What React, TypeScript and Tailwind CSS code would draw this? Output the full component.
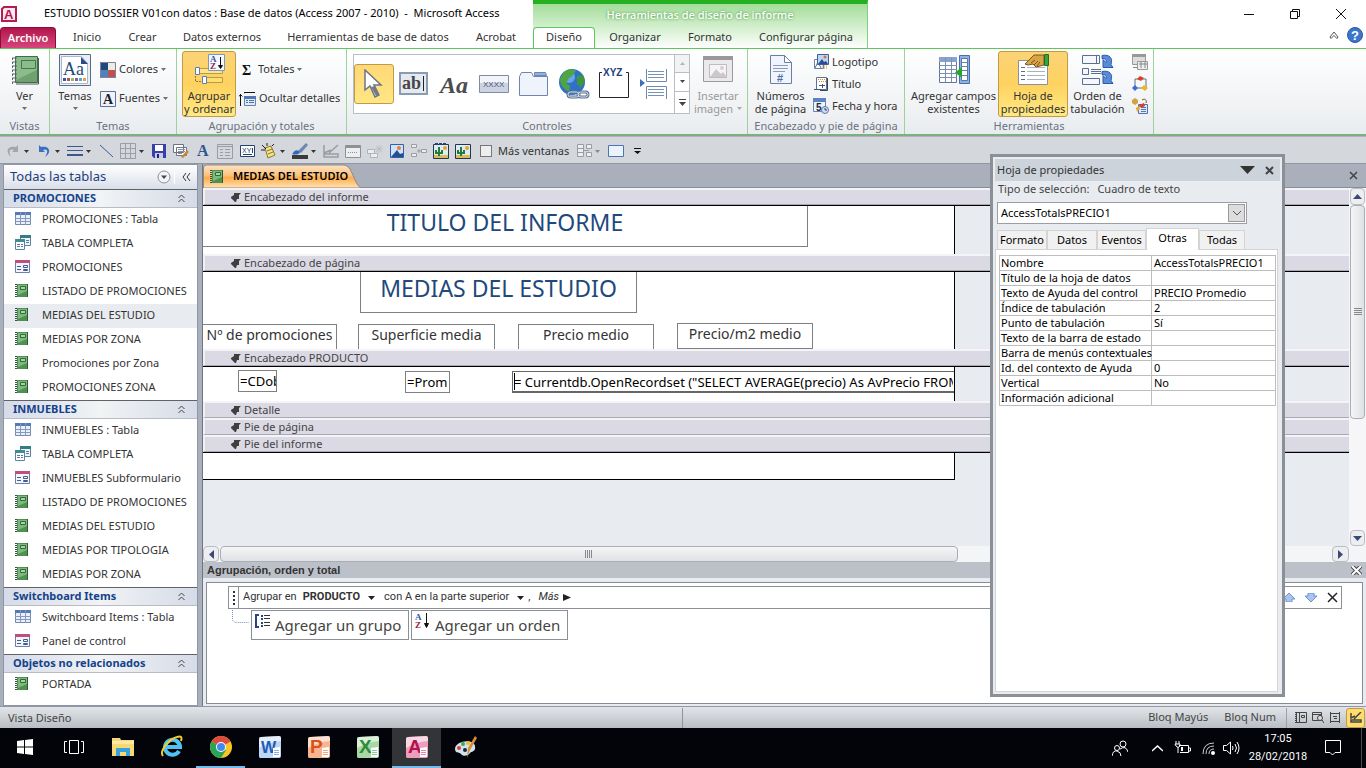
import type { ReactNode } from 'react'
import clsx from 'clsx'

const Svg = ({ w, h, children }: { w: number; h: number; children: ReactNode }) => (
  <svg width={w} height={h} viewBox={`0 0 ${w} ${h}`} fill="none" aria-hidden="true" className="shrink-0">
    {children}
  </svg>
)

const Caret = ({ color = '#6b6f76' }: { color?: string }) => (
  <Svg w={5} h={3}><path d="M0 0h5L2.500 3z" fill={color} /></Svg>
)

/* ---------- ribbon icons ---------- */

const NotebookBig = () => (
  <Svg w={32} h={32}>
    <path d="M6.500 2.500h22v26h-22z" fill="#6fa070" stroke="#3f6f46" />
    <path d="M7 3h21v13L7 26z" fill="#8dbb8c" />
    <path d="M12.500 6.500h14v8h-14z" stroke="#3f7a4a" />
    <path d="M29.500 4v26H7" stroke="#53595c" />
    {[4, 8, 12, 16, 20, 24, 28].map((y) => <path key={y} d={`M3 ${y}h5M3.500 ${y}v2`} stroke="#5c6470" />)}
  </Svg>
)

const ThemesBig = () => (
  <Svg w={32} h={32}>
    <path d="M.500.500h31v31H.500z" fill="#e8eef6" stroke="#5a6a88" />
    <path d="M2.500 2.500h20l6 7v20h-26z" fill="#fff" stroke="#a8b8d0" />
    <path d="M22 3v7h7z" fill="#294a86" />
    <text x="4" y="21" fontSize="18" fontFamily="Liberation Serif, serif" fill="#1f4a7d">Aa</text>
    <path d="M4 24h3v3H4z" fill="#2f5ca0" /><path d="M8 24h3v3H8z" fill="#c0504d" />
    <path d="M12 24h3v3h-3z" fill="#9bbb59" /><path d="M16 24h3v3h-3z" fill="#7f62a1" />
    <path d="M20 24h3v3h-3z" fill="#4bacc6" /><path d="M24 24h3v3h-3z" fill="#f79646" />
  </Svg>
)

const ColorsIcon = () => (
  <Svg w={16} h={16}>
    <path d="M0 0h8v8H0z" fill="#1f497d" /><path d="M8 0h8v8H8z" fill="#eeece1" />
    <path d="M0 8h8v8H0z" fill="#4f81bd" /><path d="M8 8h8v8H8z" fill="#c0504d" />
    <path d="M.5.500h15v15H.500z" stroke="#7c8597" />
  </Svg>
)

const FontsIcon = () => (
  <Svg w={16} h={16}>
    <path d="M.5.500h15v15H.500z" fill="#eef3fb" stroke="#5f7396" />
    <text x="3" y="13" fontSize="14" fontWeight="bold" fontFamily="Liberation Serif, serif" fill="#1b1f28">A</text>
  </Svg>
)

const GroupSortBig = () => (
  <Svg w={32} h={32}>
    <path d="M3.500 14.500h26v5h-26z" fill="#ffe58a" stroke="#b99b45" /><path d="M2.500 13.500h4v7h-4z" fill="#fff" stroke="#5a7fb8" />
    <path d="M10.500 23.500h19v5h-19z" fill="#ffdf70" stroke="#b99b45" /><path d="M9.500 22.500h4v7h-4z" fill="#fff" stroke="#5a7fb8" />
    <path d="M2.500 22v5.500H8" stroke="#8b7a45" strokeDasharray="2 1" />
    <path d="M15.500.500h16v16h-16z" fill="#f5f9ff" stroke="#7799c8" />
    <text x="17" y="8" fontSize="9" fontWeight="bold" fontFamily="Liberation Serif, serif" fill="#2b57a5">A</text>
    <text x="17" y="15" fontSize="9" fontWeight="bold" fontFamily="Liberation Serif, serif" fill="#94263b">Z</text>
    <path d="M27.500 3v11M25.500 11.500l2 3 2-3z" stroke="#111" fill="#111" />
  </Svg>
)

const HideDetailIcon = () => (
  <Svg w={17} h={14}>
    <path d="M1.500 2v12M0 4.500l1.500-2 2 2M5 .500h11M5 1l2-1" stroke="#111" />
    <path d="M5.500 4.500h11v9h-11z" fill="#dfe9f8" stroke="#6384b4" /><path d="M5 4h12v3H5z" fill="#4f77b5" />
    <path d="M7 8.500h2M10 8.500h5M7 10.500h2M10 10.500h5" stroke="#54719d" />
  </Svg>
)

const PointerBig = () => (
  <Svg w={24} h={30}>
    <path d="M3 1v20l5-4 5 11 4-2-5-10h7z" fill="#fff" stroke="#6d7484" strokeWidth="1.500" />
    <path d="M9 18l5 9 3-1-4-9z" fill="#737b8b" />
  </Svg>
)

const TextBoxBig = () => (
  <Svg w={30} h={24}>
    <path d="M1 1h27v21H1z" fill="#e5eaf1" stroke="#8b9bb3" strokeWidth="2" />
    <text x="3" y="17" fontSize="18" fontWeight="bold" fontFamily="Liberation Serif, serif" fill="#464646">ab</text>
    <path d="M24.500 4v15" stroke="#222" />
  </Svg>
)

const LabelBig = () => (
  <Svg w={32} h={26}>
    <text x="2" y="22" fontSize="24" fontStyle="italic" fontWeight="bold" fontFamily="Liberation Serif, serif" fill="#4c4c4c">Aa</text>
  </Svg>
)

const ButtonBig = () => (
  <Svg w={32} h={20}>
    <path d="M1.500 1.500h29v17h-29z" fill="#cdd4df" stroke="#7c8da8" /><path d="M2 2h28v7H2z" fill="#f2f4f8" />
    <text x="5" y="13" fontSize="8" fontFamily="Liberation Sans, sans-serif" fill="#3d5180">XXXX</text>
  </Svg>
)

const TabControlBig = () => (
  <Svg w={30} h={26}>
    <path d="M.500 5.500l2-4h10l2 4h14v19H.500z" fill="#eff4fc" stroke="#6e86ae" />
    <path d="M15.500 4.500v-3h11l1 3z" fill="#8db2e8" stroke="#6e86ae" />
  </Svg>
)

const GlobeBig = () => (
  <Svg w={32} h={32}>
    <circle cx="14" cy="14" r="13" fill="#2f70c8" /><circle cx="11" cy="9" r="6" fill="#65a5e8" />
    <path d="M5 5c5-5 10-4 13-2l-4 5-3 2-3 5 4 3-1 6c-5-3-9-7-9-13z" fill="#4fa544" />
    <path d="M19 8l6-1 2 6-4 7-4-4z" fill="#3f963e" />
    <rect x="10" y="24" width="11" height="5" rx="2.500" stroke="#5d7392" strokeWidth="3" />
    <rect x="20" y="24" width="10" height="5" rx="2.500" stroke="#5d7392" strokeWidth="3" />
    <rect x="10" y="24" width="11" height="5" rx="2.500" stroke="#d6e1ef" />
    <rect x="20" y="24" width="10" height="5" rx="2.500" stroke="#d6e1ef" />
  </Svg>
)

const OptionGroupBig = () => (
  <Svg w={32} h={32}>
    <path d="M4 4.500H1.500v25h29v-25H28" fill="#fff" stroke="#20262f" />
    <text x="5" y="8" fontSize="10" fontWeight="bold" fontFamily="Liberation Sans, sans-serif" fill="#1c4380">XYZ</text>
  </Svg>
)

const PageBreakBig = () => (
  <Svg w={28} h={30}>
    <path d="M6.500 0v12.500h20V0M6.500 30V17.500h20V30" fill="#fff" stroke="#6d8ab5" />
    <path d="M8 2.500h16M8 5.500h16M8 8.500h16M8 20.500h16M8 23.500h16M8 26.500h16" stroke="#7791b8" />
    <path d="M0 10l5 4-5 4z" fill="#3a70c0" />
  </Svg>
)

const InsertImageBig = () => (
  <Svg w={32} h={32}>
    <path d="M1.500 2.500h29v25h-29z" fill="#ece9ed" stroke="#9b989e" /><path d="M1 2h30v4H1z" fill="#9a989c" />
    <path d="M7.500 10.500h17v13h-17z" fill="#f6f4f7" stroke="#bdbac0" /><path d="M8 23l6-8 5 5 2-2 4 5z" fill="#cbc8ce" />
    <circle cx="20" cy="14" r="2" fill="#d2d0d4" />
  </Svg>
)

const PageNumberBig = () => (
  <Svg w={24} h={32}>
    <path d="M1.500 1.500h14l7 7v21h-21z" fill="#f0f5fd" stroke="#6c7f9f" /><path d="M15.500 1.500v7h7z" fill="#fff" stroke="#6c7f9f" />
    <path d="M4 11.500h15M4 14.500h15M4 17.500h12" stroke="#8a9bbb" />
    <text x="8" y="28" fontSize="11" fontWeight="bold" fontFamily="Liberation Sans, sans-serif" fill="#4c6ea6">#</text>
  </Svg>
)

const LogoIcon = () => (
  <Svg w={16} h={16}>
    <path d="M1.500 5.500h9v9h-9z" fill="#fff" stroke="#73839e" /><path d="M2 14l3-6 3 6" stroke="#476dab" />
    <path d="M4.500.500h11v10h-11z" fill="#bdd5f5" stroke="#40608f" /><path d="M5 10l4-5 2 3 2-1 2 3z" fill="#254f94" />
    <circle cx="12" cy="3" r="1.500" fill="#e96b2a" /><path d="M9 12h5M9 14h5" stroke="#d88d39" strokeDasharray="1 1" />
  </Svg>
)

const TitleIcon = () => (
  <Svg w={16} h={16}>
    <path d="M3.500 1.500h10v12h-10z" fill="#fff" stroke="#5f7191" /><path d="M5 3.500h8M6 5.500h7" stroke="#d88634" strokeDasharray="1 1" />
    <path d="M6 9.500h6M9.500 8v4M1 13.500h7" stroke="#3f5682" /><path d="M14.500 2v12.500H7" stroke="#38445a" />
  </Svg>
)

const DateIcon = () => (
  <Svg w={16} h={16}>
    <path d="M.500.500h12v13h-12z" fill="#eef4fd" stroke="#6685b8" /><path d="M0 0h13v4H0z" fill="#5b84c4" />
    <text x="3" y="13" fontSize="10" fontWeight="bold" fontFamily="Liberation Sans, sans-serif" fill="#20293a">5</text>
    <circle cx="12" cy="12" r="3.500" fill="#cfdcf3" stroke="#5b7bb0" /><path d="M12 10v2h2" stroke="#32496e" />
  </Svg>
)

const AddFieldsBig = () => (
  <Svg w={32} h={32}>
    <path d="M1.500 3.500h17v25h-17z" fill="#fff" stroke="#5f779f" /><path d="M1 3h18v5H1z" fill="#88a2cc" />
    <path d="M1 11.500h18M1 15.500h18M1 19.500h18M1 23.500h18M7.500 4v24M13.500 4v24" stroke="#7b90b3" />
    <path d="M21.500 1.500h10v28h-10z" fill="#8fb0e6" stroke="#4a6fae" /><path d="M23.500 4.500h6v22h-6z" fill="#fff" stroke="#5f779f" />
    <path d="M23 8.500h6M23 12.500h6M23 16.500h6M23 21.500h6" stroke="#6d84aa" /><path d="M24 13v11l-7-5.500z" fill="#24a82c" />
  </Svg>
)

const PropertySheetBig = () => (
  <Svg w={32} h={32}>
    <path d="M1.500 6.500h29v24h-29z" fill="#fff" stroke="#8791a4" /><path d="M4 13.500h4M4 17.500h4M4 21.500h4M4 25.500h4" stroke="#5c6c88" />
    <path d="M10 13.500h18M10 17.500h18M10 21.500h18M10 25.500h18" stroke="#a8b2c2" />
    <path d="M8 10l9-9h10v10l-8 2-3-3-5 1z" fill="#d9a445" stroke="#7d551a" />
    <path d="M14 9l4-3M17 11l4-4M20 12l3-4" stroke="#7d551a" /><path d="M27.500.500h4v11h-4z" fill="#37a53a" stroke="#1f6f24" />
  </Svg>
)

const TabOrderBig = () => (
  <Svg w={32} h={32}>
    <path d="M.500 1.500h17v8H.500zM14.500 2v8M.500 14.500h6v6h-6zM.500 24.500h17v6H.500z" fill="#f4f7fc" stroke="#5b6f92" />
    <path d="M9 15.500h10M9 17.500h10M9 19.500h10" stroke="#5b6f92" />
    {[0, 16].map((y) => (
      <path key={y} transform={`translate(0 ${y})`} d="M20 1.500c8-1.500 11 3 9 9l2 3h-10V5.500l3 3c1-3-1-4-4-4z" fill="#5a8ad8" stroke="#2a5cae" />
    ))}
  </Svg>
)

const SubformIcon = () => (
  <Svg w={16} h={16}>
    <path d="M.500.500h13v10H.500z" fill="#ddd" stroke="#999" /><path d="M0 0h14v3H0z" fill="#999" />
    <path d="M5.500 7.500h10v8h-10z" fill="#eee" stroke="#999" /><path d="M8 9h2v2H8zM12 9h2v2h-2zM8 13h2M12 13h2M1 13.500h4" stroke="#888" />
  </Svg>
)

const MacroIcon = () => (
  <Svg w={16} h={16}>
    <path d="M3 3h11v9H3z" stroke="#5b7199" /><path d="M5 3l3-3 4 2-3 3z" fill="#e23b21" />
    <path d="M0 12l3-3 3 3-3 3z" fill="#3f69d0" /><path d="M9 12l3-3 4 3-3 3z" fill="#eeb52b" />
  </Svg>
)

const ConvertIcon = () => (
  <Svg w={16} h={16}>
    <path d="M6.500 6.500h9v9h-9z" fill="#dfe9f8" stroke="#4f73b0" /><path d="M9 9.500h5M9 11.500h5M9 13.500h5" stroke="#5377b3" />
    <path d="M0 2l3-2 3 2v3L3 7 0 5z" fill="#d1a347" /><path d="M4 11l5-4M10 2c3-2 5 0 4 3" stroke="#735e25" />
    <path d="M7 7l5-2 1 3-4 2z" fill="#df3b25" /><path d="M4 10l3-2 1 3-3 3z" fill="#e0ab3d" />
  </Svg>
)

/* ---------- quick access toolbar icons ---------- */

const RedoIcon = ({ color }: { color: string }) => (
  <Svg w={14} h={14}><path d="M12 1v7H6l2-2C4 4 2 7 5 13-1 8 1 1 10 3z" fill={color} /></Svg>
)
const UndoIcon = () => (
  <Svg w={14} h={14}><path d="M2 1v7h6L6 6c4-2 6 1 2 7 7-4 5-12-4-10z" fill="#3b6fc4" /></Svg>
)
const LinesIcon = () => <Svg w={16} h={14}><path d="M0 2.500h16M0 6.500h16" stroke="#39598f" /><path d="M0 11h16" stroke="#39598f" strokeWidth="2" /></Svg>
const LineIcon = () => <Svg w={14} h={14}><path d="M1 1l13 12" stroke="#3a5a9a" /></Svg>
const GridIcon = () => <Svg w={16} h={16}><path d="M.5.500h15v15H.500zM5.500 0v16M10.500 0v16M0 5.500h16M0 10.500h16" stroke="#9b9ea4" /></Svg>
const SaveIcon = () => (
  <Svg w={14} h={14}><path d="M0 0h14v14H2l-2-2z" fill="#3a3fae" /><path d="M3 1h8v6H3z" fill="#fff" /><path d="M3 9h8v5H3z" fill="#c9cbe6" /><path d="M5 10h2v4H5z" fill="#20246d" /></Svg>
)
const PagesIcon = () => (
  <Svg w={16} h={15}>
    <path d="M.500.500h10v8H.500zM3.500 3.500h10v8h-10z" fill="#fff" stroke="#6b7384" /><path d="M5 5.500h7M5 7.500h7M5 9.500h4" stroke="#89919f" />
    <path d="M8 13l6-7 2 2-6 6z" fill="#c48a3b" />
  </Svg>
)
const LetterIcon = () => <Svg w={16} h={16}><text x="2" y="13" fontSize="16" fontWeight="bold" fontFamily="Liberation Serif, serif" fill="#2f568f">A</text></Svg>
const FormIcon = () => <Svg w={16} h={15}><path d="M.5.500h15v14H.500z" stroke="#999ca3" /><path d="M0 2.500h16M3 5.500h3M8 5.500h5M3 8.500h3M8 8.500h5M3 11.500h3M8 11.500h5" stroke="#999ca3" /></Svg>
const XyIcon = () => (
  <Svg w={15} h={12}><path d="M.5.500h14v11H.500z" fill="#fff" stroke="#26426f" /><text x="2" y="8" fontSize="7" fontFamily="Liberation Sans, sans-serif" fill="#26426f">XY</text><path d="M3 9.500h9M12.500 3v5" stroke="#26426f" /></Svg>
)
const WizardIcon = () => (
  <Svg w={16} h={16}><path d="M4 5l6-2 4 9-7 3z" fill="#f4e38a" stroke="#8b7728" /><path d="M6 8l5-2M7 11l5-2" stroke="#8b7728" /><path d="M1 2l4 4M0 7h4M6 0v3M13 1l-2 2" stroke="#222" /></Svg>
)
const BrushIcon = () => (
  <Svg w={18} h={16}><path d="M15 0l2 2-7 8-3-2z" fill="#6d86b2" /><path d="M2 10c2-4 5-3 7-1-1 3-5 3-8 2z" fill="#3069bd" /><path d="M1 12h16v4H1z" fill="#3a3a3a" /></Svg>
)
const RulerIcon = () => <Svg w={16} h={14}><path d="M1 1v8l7-3M1 10h14v3H1zM15 1L6 9" stroke="#9a9da2" strokeWidth="1.500" /></Svg>
const HeaderIcon = () => <Svg w={16} h={13}><path d="M.5.500h15v12H.500z" fill="#eee" stroke="#8d9095" /><path d="M1 2h14" stroke="#8d9095" strokeWidth="2" /><path d="M3 7.500h10" stroke="#8d9095" strokeDasharray="1 1" /></Svg>
const NewItemIcon = () => <Svg w={16} h={15}><path d="M.500 5.500h7v4h-7zM3.500 9.500h7v4h-7z" fill="#eee" stroke="#b1b3b8" /><path d="M12 1v8M8 5h8M9 2l6 6M15 2L9 8" stroke="#bdbfc4" /></Svg>
const PictureIcon = () => (
  <Svg w={14} h={14}><path d="M.5.500h13v13H.500z" fill="#cfe2fa" stroke="#3461a5" /><path d="M1 13l6-7 3 4 3-1v4z" fill="#244f90" /><circle cx="9" cy="4" r="2" fill="#ef7b2d" /></Svg>
)
const AnchorIcon = () => <Svg w={16} h={14}><path d="M.500.500h5v3h-5zM.500 9.500h5v3h-5zM10.500 5.500h5v3h-5zM6 7h4M8 5v4" fill="#eee" stroke="#9b9da2" /></Svg>
const CactusIcon = ({ caption }: { caption?: boolean }) => (
  <Svg w={16} h={16}>
    <path d="M.500 1.500h15v14H.500z" fill="#dcebf5" stroke="#26374d" /><path d="M1 12h14v3H1z" fill="#d8bb5c" />
    <path d="M6 13V4M3 7v3h6V7" stroke="#247d35" strokeWidth="2" /><circle cx="12" cy="5" r="2" fill="#eda22b" />
    {caption && <path d="M2 1h12" stroke="#26426f" strokeWidth="2" strokeDasharray="3 1" />}
  </Svg>
)
const ArrangeIcon = () => <Svg w={15} h={14}><path d="M.500.500h6v12h-6zM1 4.500h6M1 8.500h6M9.500.500h5v4h-5zM9.500 8.500h5v4h-5zM7 6.500h5" fill="#eee" stroke="#999ca2" /></Svg>
const WindowIcon = () => <Svg w={16} h={12}><path d="M.5.500h15v11H.500z" fill="#eaf3fd" stroke="#4d76ae" /></Svg>

/* ---------- navigation pane icons ---------- */

const TableIcon = () => (
  <Svg w={16} h={13}>
    <path d="M.5.500h15v12H.500z" fill="#e9f0fb" stroke="#7389b2" /><path d="M0 0h16v3H0z" fill="#5979b5" />
    <path d="M0 6.500h16M0 9.500h16M5.500 0v13M10.500 0v13" stroke="#8499bd" />
  </Svg>
)
const QueryIcon = () => (
  <Svg w={16} h={15}>
    <path d="M5.500.500h10v10h-10z" fill="#eef6fa" stroke="#5b8495" /><path d="M5 0h11v3H5z" fill="#367c86" />
    <path d="M.500 4.500h9v10h-9z" fill="#fff" stroke="#5b84a5" /><path d="M0 4h10v3H0z" fill="#3f8c93" />
    <path d="M2 9.500h3M6 9.500h2M2 11.500h3M6 11.500h2M11 5.500h3M11 7.500h3" stroke="#557ca8" />
  </Svg>
)
const FormNavIcon = () => (
  <Svg w={15} h={13}>
    <path d="M.5.500h14v12H.500z" fill="#f3f5fb" stroke="#6b7fa8" /><path d="M0 0h15v3H0z" fill="#c04f79" />
    <path d="M2 6.500h4M2 9.500h4M8.500 5.500h4v2h-4zM8.500 9.500h4v1h-4z" stroke="#3f5d92" />
  </Svg>
)
const ReportIcon = () => (
  <Svg w={14} h={13}>
    <path d="M2 0h11v13H2z" fill="#4f9150" /><path d="M3 1h9v6l-9 4z" fill="#7db87c" />
    <path d="M5.500 2.500h5v3h-5z" fill="#a9d3a6" stroke="#2e6b36" /><path d="M12.500 0v13" stroke="#2e5d35" />
    <path d="M1 0v13" stroke="#3d4a4c" strokeWidth="2" strokeDasharray="1 1" />
  </Svg>
)

const navIcons = { table: TableIcon, query: QueryIcon, form: FormNavIcon, report: ReportIcon }
type NavKind = keyof typeof navIcons

const navSections: { title: string; items: { kind: NavKind; name: string; active?: boolean }[] }[] = [
  {
    title: 'PROMOCIONES',
    items: [
      { kind: 'table', name: 'PROMOCIONES : Tabla' },
      { kind: 'query', name: 'TABLA COMPLETA' },
      { kind: 'form', name: 'PROMOCIONES' },
      { kind: 'report', name: 'LISTADO DE PROMOCIONES' },
      { kind: 'report', name: 'MEDIAS DEL ESTUDIO', active: true },
      { kind: 'report', name: 'MEDIAS POR ZONA' },
      { kind: 'report', name: 'Promociones por Zona' },
      { kind: 'report', name: 'PROMOCIONES ZONA' },
    ],
  },
  {
    title: 'INMUEBLES',
    items: [
      { kind: 'table', name: 'INMUEBLES : Tabla' },
      { kind: 'query', name: 'TABLA COMPLETA' },
      { kind: 'form', name: 'INMUEBLES Subformulario' },
      { kind: 'report', name: 'LISTADO DE PROMOCIONES' },
      { kind: 'report', name: 'MEDIAS DEL ESTUDIO' },
      { kind: 'report', name: 'MEDIAS POR TIPOLOGIA' },
      { kind: 'report', name: 'MEDIAS POR ZONA' },
    ],
  },
  {
    title: 'Switchboard Items',
    items: [
      { kind: 'table', name: 'Switchboard Items : Tabla' },
      { kind: 'form', name: 'Panel de control' },
    ],
  },
  { title: 'Objetos no relacionados', items: [{ kind: 'report', name: 'PORTADA' }] },
]

/* ---------- title bar and tabs ---------- */

const AccessMark = () => (
  <Svg w={16} h={16}>
    <path d="M3 1h12v14H1V3z" fill="#fbe9f0" stroke="#b51c54" strokeWidth="2" />
    <text x="3" y="13" fontSize="13" fontWeight="bold" fontFamily="Liberation Sans, sans-serif" fill="#b3124c">A</text>
  </Svg>
)

const Tab = ({ label, className }: { label: string; className: string }) => (
  <button className={clsx('h-[21px] text-center whitespace-nowrap', className)}>{label}</button>
)

const Header = () => (
  <header className="flex h-[49px] bg-white">
    <div className="flex w-[533px] shrink-0 flex-col border-b border-[#5cc85c]">
      <div className="flex h-[27px] items-center gap-[27px] pl-px">
        <AccessMark />
        <h1 className="text-[11px] whitespace-pre text-black">{'ESTUDIO DOSSIER V01con datos : Base de datos (Access 2007 - 2010)  -  Microsoft Access'}</h1>
      </div>
      <div className="flex">
        <Tab label="Archivo" className="w-14 rounded-t-sm border border-b-0 border-[#8b0b3c] bg-linear-to-b from-[#b0124c] to-[#d8447c] font-semibold text-white" />
        <Tab label="Inicio" className="w-[62px]" />
        <Tab label="Crear" className="w-[49px]" />
        <Tab label="Datos externos" className="w-[110px]" />
        <Tab label="Herramientas de base de datos" className="w-[182px]" />
        <Tab label="Acrobat" className="w-[74px]" />
      </div>
    </div>
    <div className="flex w-[335px] shrink-0 flex-col border-t-4 border-r border-t-[#25b022] border-r-[#7fcf7c] bg-linear-to-b from-[#a3dd99] to-white">
      <p className="h-[23px] pt-[3px] text-center font-medium text-white [text-shadow:0_0_3px_#3f8a3a]">Herramientas de diseño de informe</p>
      <div className="flex border-b border-[#5cc85c]">
        <Tab label="Diseño" className="-mb-px w-[62px] rounded-t-sm border border-b-0 border-[#5cc85c] bg-white pb-px" />
        <Tab label="Organizar" className="w-[80px]" />
        <Tab label="Formato" className="w-[70px]" />
        <Tab label="Configurar página" className="grow" />
      </div>
    </div>
    <div className="flex grow flex-col items-end border-b border-[#5cc85c]">
      <div className="flex h-[27px] items-center gap-9 pr-5">
        <button aria-label="Minimizar"><Svg w={10} h={10}><path d="M0 5.500h10" stroke="#111" /></Svg></button>
        <button aria-label="Restaurar"><Svg w={10} h={10}><path d="M.500 2.500h7v7h-7zM2.500 2V.500h7v7H8" stroke="#111" /></Svg></button>
        <button aria-label="Cerrar"><Svg w={10} h={10}><path d="M0 0l10 10M10 0L0 10" stroke="#111" /></Svg></button>
      </div>
      <div className="flex items-center gap-2 pr-[3px]">
        <button aria-label="Contraer cinta"><Svg w={10} h={8}><path d="M1 6l4-5 4 5-1 1.500-3-3-3 3z" stroke="#555" /></Svg></button>
        <button aria-label="Ayuda">
          <Svg w={16} h={16}>
            <circle cx="8" cy="8" r="7.500" fill="#3c76cc" stroke="#2a5aa6" />
            <text x="4" y="13" fontSize="13" fontWeight="bold" fontFamily="Liberation Sans, sans-serif" fill="#fff">?</text>
          </Svg>
        </button>
      </div>
    </div>
  </header>
)

/* ---------- ribbon ---------- */

const Group = ({ label, className, children }: { label: string; className: string; children: ReactNode }) => (
  <section className={clsx('flex shrink-0 flex-col border-r border-[#9fd09f] pt-0.5', className)}>
    <div className="flex h-[66px]">{children}</div>
    <h2 className="grow text-center leading-[18px] text-[#6b7280]">{label}</h2>
  </section>
)

const BigButton = ({ icon, lines, className, active, disabled }: { icon: ReactNode; lines: ReactNode[]; className: string; active?: boolean; disabled?: boolean }) => (
  <button
    disabled={disabled}
    className={clsx(
      'flex h-[66px] shrink-0 flex-col items-center rounded-[3px] border pt-0.5 leading-[13px] whitespace-nowrap',
      active ? 'border-[#c29a45] bg-linear-to-b from-[#fbd376] via-[#ffd25f] to-[#ffe983]' : 'border-transparent',
      disabled && 'text-[#9a9a9a]',
      className,
    )}
  >
    {icon}
    <span className="mt-[3px]">{lines[0]}</span>
    <span className="flex h-[13px] items-center gap-1">{lines[1]}</span>
  </button>
)

const SmallButton = ({ icon, label, caret }: { icon: ReactNode; label: string; caret?: boolean }) => (
  <button className="flex h-4 items-center gap-[3px] whitespace-nowrap">
    {icon}
    <span>{label}</span>
    {caret && <Caret />}
  </button>
)

const controls = [
  { name: 'Seleccionar', icon: <PointerBig />, active: true },
  { name: 'Cuadro de texto', icon: <TextBoxBig /> },
  { name: 'Etiqueta', icon: <LabelBig /> },
  { name: 'Botón', icon: <ButtonBig /> },
  { name: 'Control de pestaña', icon: <TabControlBig /> },
  { name: 'Hipervínculo', icon: <GlobeBig /> },
  { name: 'Grupo de opciones', icon: <OptionGroupBig /> },
  { name: 'Salto de página', icon: <PageBreakBig /> },
]

const Ribbon = () => (
  <div className="flex h-[87px] border-b-2 border-[#7fae83] bg-linear-to-b from-white to-[#e9ecef]">
    <Group label="Vistas" className="w-[50px]">
      <BigButton icon={<NotebookBig />} lines={['Ver', <Caret />]} className="w-full" />
    </Group>
    <Group label="Temas" className="w-[127px]">
      <BigButton icon={<ThemesBig />} lines={['Temas', <Caret />]} className="w-[50px]" />
      <div className="flex flex-col justify-center gap-[13px]">
        <SmallButton icon={<ColorsIcon />} label="Colores" caret />
        <SmallButton icon={<FontsIcon />} label="Fuentes" caret />
      </div>
    </Group>
    <Group label="Agrupación y totales" className="w-[170px]">
      <BigButton icon={<GroupSortBig />} lines={['Agrupar', 'y ordenar']} className="ml-[5px] w-[54px]" active />
      <div className="flex flex-col justify-center gap-[13px] pl-[3px]">
        <SmallButton icon={<Svg w={16} h={16}><text x="3" y="13" fontSize="14" fontWeight="bold" fontFamily="Liberation Serif, serif" fill="#111">Σ</text></Svg>} label="Totales" caret />
        <SmallButton icon={<HideDetailIcon />} label="Ocultar detalles" />
      </div>
    </Group>
    <Group label="Controles" className="w-[401px]">
      <div className="mt-[3px] ml-1.5 flex h-[60px] border border-[#b9bdc4] bg-white">
        <div className="flex items-center">
          {controls.map((c) => (
            <button
              key={c.name}
              aria-label={c.name}
              className={clsx(
                'flex h-10 w-10 items-center justify-center rounded-[3px] border',
                c.active ? 'border-[#c29a45] bg-linear-to-b from-[#ffd877] to-[#ffe784]' : 'border-transparent',
              )}
            >
              {c.icon}
            </button>
          ))}
        </div>
        <div className="flex w-[15px] flex-col divide-y divide-[#b9bdc4] border-l border-[#b9bdc4]">
          <button aria-label="Fila anterior" className="flex grow items-center justify-center bg-[#f1f2f4]"><Svg w={5} h={3}><path d="M0 3h5L2.500 0z" fill="#b1b4b9" /></Svg></button>
          <button aria-label="Fila siguiente" className="flex grow items-center justify-center"><Caret color="#444" /></button>
          <button aria-label="Más controles" className="flex grow items-center justify-center"><Svg w={7} h={7}><path d="M0 .500h7" stroke="#444" /><path d="M0 3h7L3.500 7z" fill="#444" /></Svg></button>
        </div>
      </div>
      <BigButton icon={<InsertImageBig />} lines={['Insertar', <>imagen <Caret color="#aaa" /></>]} className="w-[56px]" disabled />
    </Group>
    <Group label="Encabezado y pie de página" className="w-[157px]">
      <BigButton icon={<PageNumberBig />} lines={['Números', 'de página']} className="w-[65px]" />
      <div className="flex flex-col justify-around">
        <SmallButton icon={<LogoIcon />} label="Logotipo" />
        <SmallButton icon={<TitleIcon />} label="Título" />
        <SmallButton icon={<DateIcon />} label="Fecha y hora" />
      </div>
    </Group>
    <Group label="Herramientas" className="w-[249px]">
      <BigButton icon={<AddFieldsBig />} lines={['Agregar campos', 'existentes']} className="w-[93px] pl-1" />
      <BigButton icon={<PropertySheetBig />} lines={['Hoja de', 'propiedades']} className="w-[70px]" active />
      <BigButton icon={<TabOrderBig />} lines={['Orden de', 'tabulación']} className="w-[59px]" />
      <div className="flex grow flex-col items-center justify-around">
        <button aria-label="Subformulario en ventana nueva"><SubformIcon /></button>
        <button aria-label="Ver código"><MacroIcon /></button>
        <button aria-label="Convertir macros"><ConvertIcon /></button>
      </div>
    </Group>
  </div>
)

const quickTools: { name: string; icon: ReactNode; menu?: boolean }[] = [
  { name: 'Rehacer', icon: <RedoIcon color="#a3a6ab" />, menu: true },
  { name: 'Deshacer', icon: <UndoIcon />, menu: true },
  { name: 'Grosor', icon: <LinesIcon />, menu: true },
  { name: 'Línea', icon: <LineIcon /> },
  { name: 'Cuadrícula', icon: <GridIcon />, menu: true },
  { name: 'Guardar', icon: <SaveIcon /> },
  { name: 'Propiedades', icon: <PagesIcon /> },
  { name: 'Fuente', icon: <LetterIcon /> },
  { name: 'Formulario', icon: <FormIcon /> },
  { name: 'Botón', icon: <XyIcon /> },
  { name: 'Asistente', icon: <WizardIcon />, menu: true },
  { name: 'Color', icon: <BrushIcon />, menu: true },
  { name: 'Regla', icon: <RulerIcon /> },
  { name: 'Encabezado', icon: <HeaderIcon /> },
  { name: 'Nuevo', icon: <NewItemIcon /> },
  { name: 'Imagen', icon: <PictureIcon /> },
  { name: 'Delimitar', icon: <AnchorIcon /> },
  { name: 'Marco dependiente', icon: <CactusIcon caption /> },
  { name: 'Marco independiente', icon: <CactusIcon /> },
]

const QuickBar = () => (
  <div className="flex h-7 items-center border-t border-b border-t-[#aeb2b9] border-b-[#8d97a6] bg-[#d4d7dc] pt-0.5 pl-0.5">
    {quickTools.map((t) => (
      <button key={t.name} aria-label={t.name} className="flex items-center">
        <span className="flex w-[22px] justify-center">{t.icon}</span>
        {t.menu && <span className="flex w-[9px]"><Caret color="#333" /></span>}
      </button>
    ))}
    <label className="ml-1.5 flex items-center gap-1.5 whitespace-nowrap">
      <input type="checkbox" className="h-3 w-3 appearance-none border border-[#777] bg-[#eee]" />
      Más ventanas
    </label>
    <button aria-label="Organizar" className="ml-2 flex items-center gap-[3px]"><ArrangeIcon /><Caret color="#888" /></button>
    <button aria-label="Ventana" className="ml-2"><WindowIcon /></button>
    <button aria-label="Personalizar" className="ml-2.5"><Svg w={7} h={7}><path d="M0 .500h7" stroke="#111" /><path d="M0 3h7L3.500 6z" fill="#111" /></Svg></button>
  </div>
)

/* ---------- navigation pane ---------- */

const NavPane = () => (
  <nav className="flex w-[195px] shrink-0 flex-col border border-[#8d97a6] bg-white">
    <div className="flex h-6 items-center justify-between bg-linear-to-b from-white to-[#d9dfe9] pl-1.5 text-[13px] text-[#1f3f7c]">
      Todas las tablas
      <div className="flex items-center">
        <button aria-label="Filtrar objetos" className="border-r border-white pr-[3px]">
          <Svg w={14} h={14}><circle cx="7" cy="7" r="6" fill="#f3f4f7" stroke="#8b8f96" /><path d="M4 5.500h6L7 9z" fill="#444" /></Svg>
        </button>
        <button aria-label="Contraer panel" className="pr-1.5 pl-[7px]">
          <Svg w={9} h={8}><path d="M4 0L1 4l3 4M8 0L5 4l3 4" stroke="#333" /></Svg>
        </button>
      </div>
    </div>
    {navSections.map((s) => (
      <section key={s.title}>
        <h3 className="flex h-[19px] items-center justify-between border-t border-b border-t-[#5f6368] border-b-[#b8bcc4] bg-linear-to-r from-[#d5dbe8] via-[#f1f3f4] to-[#d5dbe8] pr-3 pl-[9px] text-[11px] font-bold text-[#15428b]">
          {s.title}
          <Svg w={7} h={9}><path d="M.5 4L3.500 1l3 3M.500 8l3-3 3 3" stroke="#444" /></Svg>
        </h3>
        <ul>
          {s.items.map((item) => {
            const Icon = navIcons[item.kind]
            return (
              <li key={item.name}>
                <a href="#" className={clsx('flex h-6 items-center pb-0.5 pl-[11px] text-[#333]', item.active && 'bg-[#e8ebf0]')}>
                  <span className="flex w-[27px] pb-0.5"><Icon /></span>
                  {item.name}
                </a>
              </li>
            )
          })}
        </ul>
      </section>
    ))}
  </nav>
)

/* ---------- report designer ---------- */

const SectionBar = ({ label }: { label: string }) => (
  <div className="flex h-[17px] items-center gap-[3px] border-t-2 border-b border-l-2 border-t-[#f4f4f8] border-b-[#a9a9b3] border-l-[#f0f0f5] bg-[#dad9e4] pl-[26px] text-[#444]">
    <Svg w={10} h={9}><path d="M3 0h7L8 2v4H6l-1 3H4L0 5V4l3-2z" fill="#3f3f3f" /></Svg>
    {label}
  </div>
)

const Band = ({ className, children }: { className: string; children?: ReactNode }) => (
  <div className={clsx('border-t border-black', className)}>
    <div className="relative h-full w-[752px] overflow-hidden border-r border-black bg-white">{children}</div>
  </div>
)

const titleBox = 'absolute top-0 h-[41px] border-[#808080] text-center text-[23px] leading-8 whitespace-nowrap text-[#1f497d]'
const labelBox = 'absolute h-[26px] border border-[#808080] text-center text-[14px] leading-5 whitespace-nowrap text-[#333]'
const valueBox = 'absolute h-[22px] overflow-hidden border border-[#808080] pl-px text-[13px] leading-5 text-black'

const Designer = () => (
  <div className="flex h-[358px] bg-[#e8ebf0]">
    <div className="min-w-0 grow">
      <SectionBar label="Encabezado del informe" />
      <Band className="h-[49px]">
        <div className={clsx(titleBox, 'left-0 w-[605px] border-r border-b')}>TITULO DEL INFORME</div>
      </Band>
      <SectionBar label="Encabezado de página" />
      <Band className="h-[78px]">
        <div className={clsx(titleBox, 'left-[157px] w-[277px] border-x border-b')}>MEDIAS DEL ESTUDIO</div>
        <div className={clsx(labelBox, 'top-[52px] -left-px w-[135px]')}>Nº de promociones</div>
        <div className={clsx(labelBox, 'top-[52px] left-[155px] w-[137px]')}>Superficie media</div>
        <div className={clsx(labelBox, 'top-[52px] left-[315px] w-[136px]')}>Precio medio</div>
        <div className={clsx(labelBox, 'top-[51px] left-[474px] w-[136px]')}>Precio/m2 medio</div>
      </Band>
      <SectionBar label="Encabezado PRODUCTO" />
      <Band className="h-[35px]">
        <div className={clsx(valueBox, 'top-[3px] left-[35px] w-[39px]')}>=CDobl</div>
        <div className={clsx(valueBox, 'top-[4px] left-[202px] w-[45px]')}>=Prom</div>
        <input
          aria-label="Origen del control"
          defaultValue={'= Currentdb.OpenRecordset ("SELECT AVERAGE(precio) As AvPrecio FROM PROMOCIONES'}
          className="absolute top-[4px] left-[309px] h-[22px] w-[443px] border border-b-2 border-[#666] bg-white px-px text-[13px] text-black outline-none"
        />
        <span className="absolute top-[6px] left-[311px] h-[17px] w-px bg-black" />
      </Band>
      <SectionBar label="Detalle" />
      <SectionBar label="Pie de página" />
      <SectionBar label="Pie del informe" />
      <Band className="h-[27px]" />
      <div className="w-[752px] border-t border-black" />
    </div>
    <div className="flex w-[17px] shrink-0 flex-col justify-between bg-[#f6f6f8] px-px">
      <button aria-label="Subir" className="flex h-[17px] items-center justify-center rounded-sm border border-[#b9bcc2] bg-[#eceef1]"><Svg w={9} h={5}><path d="M0 5h9L4.500 0z" fill="#3a4a73" /></Svg></button>
      <div className="flex grow flex-col">
        <div className="flex h-[214px] items-center justify-center rounded-sm border border-[#a9adb4] bg-linear-to-r from-[#f6f6f7] to-[#dfe1e4]">
          <Svg w={8} h={8}><path d="M0 .500h8M0 2.500h8M0 4.500h8M0 6.500h8" stroke="#85888e" /></Svg>
        </div>
      </div>
      <button aria-label="Bajar" className="flex h-4 items-center justify-center rounded-sm border border-[#b9bcc2] bg-[#eceef1]"><Svg w={9} h={5}><path d="M0 0h9L4.500 5z" fill="#3a4a73" /></Svg></button>
    </div>
  </div>
)

const HScroll = () => (
  <div className="flex h-4 gap-px bg-[#f4f5f7] pr-[17px]">
    <button aria-label="Izquierda" className="flex w-4 items-center justify-center rounded-sm border border-[#b9bcc2] bg-[#eceef1]"><Svg w={5} h={9}><path d="M5 0v9L0 4.500z" fill="#3a4a73" /></Svg></button>
    <div className="flex w-[738px] items-center justify-center rounded-sm border border-[#a9adb4] bg-linear-to-b from-[#f6f6f7] to-[#dfe1e4]">
      <Svg w={8} h={8}><path d="M.500 0v8M2.500 0v8M4.500 0v8M6.500 0v8" stroke="#85888e" /></Svg>
    </div>
    <button aria-label="Derecha" className="ml-auto flex w-[17px] items-center justify-center rounded-sm border border-[#b9bcc2] bg-[#eceef1]"><Svg w={5} h={9}><path d="M0 0v9l5-4.500z" fill="#3a4a73" /></Svg></button>
  </div>
)

const GroupingPane = () => (
  <section className="flex grow flex-col bg-[#e8ebf0]">
    <div className="flex h-4 items-center justify-between bg-[#bcc0c9] pr-1 pl-1 font-[Liberation_Sans,sans-serif] text-[11px] font-bold text-[#333]">
      Agrupación, orden y total
      <button aria-label="Cerrar panel"><Svg w={11} h={9}><path d="M1 0l9 9M10 0L1 9" stroke="#444" strokeWidth="4" /><path d="M1 0l9 9M10 0L1 9" stroke="#fff" strokeWidth="2" /></Svg></button>
    </div>
    <div className="mx-[3px] mt-1 mb-0.5 grow border border-[#858c96] bg-white pt-[3px]">
      <div className="mr-5 ml-[21px] flex h-[23px] items-center border border-[#8b8f96]">
        <span className="flex h-full w-[10px] items-center justify-center border-r border-[#8b8f96]"><Svg w={2} h={14}><path d="M1 0v14" stroke="#333" strokeWidth="2" strokeDasharray="2 2" /></Svg></span>
        <p className="ml-1 flex items-center font-[Roboto,sans-serif] whitespace-nowrap text-[#333]">
          Agrupar en
          <button className="ml-1.5 flex items-center gap-2 font-bold">PRODUCTO <Svg w={7} h={4}><path d="M0 0h7L3.500 4z" fill="#222" /></Svg></button>
          <button className="ml-[9px] flex items-center gap-2">con A en la parte superior <Svg w={7} h={4}><path d="M0 0h7L3.500 4z" fill="#222" /></Svg></button>
          <span className="ml-1">,</span>
          <button className="ml-2 flex items-center gap-1 italic">Más <Svg w={8} h={7}><path d="M0 0v7l8-3.500z" fill="#222" /></Svg></button>
        </p>
        <div className="ml-auto flex items-center gap-[10px] pr-[3px]">
          <button aria-label="Subir nivel"><Svg w={12} h={9}><path d="M6 0l6 6H9v3H3V6H0z" fill="#a9c5ef" stroke="#6d92cc" /></Svg></button>
          <button aria-label="Bajar nivel"><Svg w={12} h={9}><path d="M6 9L0 3h3V0h6v3h3z" fill="#a9c5ef" stroke="#6d92cc" /></Svg></button>
          <button aria-label="Eliminar"><Svg w={11} h={11}><path d="M1 1l9 9M10 1L1 10" stroke="#222" strokeWidth="1.500" /></Svg></button>
        </div>
      </div>
      <div className="ml-6 flex pt-px">
        <Svg w={20} h={16}><path d="M1.500 0v9q0 3.500 5 3.500h11" stroke="#7390c0" strokeDasharray="1 1" /></Svg>
        <button className="flex h-[30px] w-[158px] items-center gap-1 border border-[#8b8f96] pl-[3px] text-[15px] whitespace-nowrap text-[#444]">
          <span className="-mt-2"><Svg w={16} h={14}><path d="M4 1H1v12h3" stroke="#27457f" strokeWidth="2" /><path d="M6 2h2M6 5h2M6 9h2M6 12h2" stroke="#27457f" strokeWidth="2" /><path d="M9 1.500h6M9 4.500h6M9 8.500h6M9 11.500h6" stroke="#333" /></Svg></span>
          Agregar un grupo
        </button>
        <button className="ml-0.5 flex h-[30px] w-[157px] items-center gap-1 border border-[#8b8f96] pl-[3px] text-[15px] whitespace-nowrap text-[#444]">
          <span className="-mt-2">
            <Svg w={16} h={16}>
              <text x="0" y="7" fontSize="9" fontWeight="bold" fontFamily="Liberation Serif, serif" fill="#2b57a5">A</text>
              <text x="0" y="15" fontSize="9" fontWeight="bold" fontFamily="Liberation Serif, serif" fill="#94263b">Z</text>
              <path d="M11.500 0v13M9.500 10.500h4l-2 4z" stroke="#111" fill="#111" />
            </Svg>
          </span>
          Agregar un orden
        </button>
      </div>
    </div>
  </section>
)

const DocumentArea = () => (
  <main className="flex min-w-0 grow flex-col border-l border-[#6f7782]">
    <div className="flex h-6 items-center justify-between border-b border-[#868e99] bg-[#a9b0bb] pr-2">
      <button className="relative flex h-6 w-[158px] items-center pt-0.5 pl-[7px] font-semibold text-black">
        <svg className="absolute top-0 left-0" width="158" height="24" viewBox="0 0 158 24" aria-hidden="true">
          <defs>
            <linearGradient id="tab" x1="0" y1="0" x2="0" y2="1">
              <stop offset="0" stopColor="#fde3c5" />
              <stop offset=".45" stopColor="#fcc27e" />
              <stop offset=".55" stopColor="#ffad4a" />
              <stop offset="1" stopColor="#ffe3b5" />
            </linearGradient>
          </defs>
          <path d="M.500 24V4q0-3 3-3h137q5 0 8 7l5 11q2 4 5 5z" fill="url(#tab)" stroke="#8f8880" />
        </svg>
        <span className="relative flex items-center gap-[9px] whitespace-nowrap"><ReportIcon /> MEDIAS DEL ESTUDIO</span>
      </button>
      <button aria-label="Cerrar documento"><Svg w={9} h={9}><path d="M1 1l7 7M8 1L1 8" stroke="#444" strokeWidth="1.500" /></Svg></button>
    </div>
    <Designer />
    <HScroll />
    <GroupingPane />
  </main>
)

/* ---------- property sheet ---------- */

const properties = [
  ['Nombre', 'AccessTotalsPRECIO1'],
  ['Título de la hoja de datos', ''],
  ['Texto de Ayuda del control', 'PRECIO Promedio'],
  ['Índice de tabulación', '2'],
  ['Punto de tabulación', 'Sí'],
  ['Texto de la barra de estado', ''],
  ['Barra de menús contextuales', ''],
  ['Id. del contexto de Ayuda', '0'],
  ['Vertical', 'No'],
  ['Información adicional', ''],
]

const sheetTabs = [
  { label: 'Formato', width: 'w-[50px]' },
  { label: 'Datos', width: 'w-[50px]' },
  { label: 'Eventos', width: 'w-[49px]' },
  { label: 'Otras', width: 'w-[53px]', active: true },
  { label: 'Todas', width: 'w-[46px]' },
]

const PropertySheet = () => (
  <aside className="absolute top-[154px] right-[81px] flex h-[543px] w-[295px] flex-col border-3 border-[#8a9096] bg-[#e8ebf0] p-0.5">
    <div className="flex h-[22px] items-center justify-between bg-[#cdd3db] pr-1.5 pl-0.5 text-[#333]">
      Hoja de propiedades
      <div className="flex items-center gap-[10px]">
        <button aria-label="Opciones del panel"><Svg w={15} h={8}><path d="M0 0h15L7.500 8z" fill="#333" /></Svg></button>
        <button aria-label="Cerrar hoja"><Svg w={9} h={9}><path d="M1 1l7 7M8 1L1 8" stroke="#444" strokeWidth="2" /></Svg></button>
      </div>
    </div>
    <p className="h-[21px] pl-[3px] leading-[15px] text-[#444]">Tipo de selección:<span className="ml-2">Cuadro de texto</span></p>
    <div className="relative ml-0.5 w-[250px]">
      <select aria-label="Objeto" className="h-[22px] w-full appearance-none border border-[#9b9fa5] bg-white pl-[3px] text-black">
        <option>AccessTotalsPRECIO1</option>
      </select>
      <span className="pointer-events-none absolute top-0.5 right-0.5 flex h-[18px] w-[17px] items-center justify-center border border-[#999] bg-[#ddd]"><Svg w={8} h={5}><path d="M0 0l4 4 4-4" stroke="#555" /></Svg></span>
    </div>
    <div className="mt-1 ml-0.5 flex h-[21px] items-end text-black">
      {sheetTabs.map((t) => (
        <button
          key={t.label}
          className={clsx(t.width, 'border border-b-0 border-[#d4d4d4] text-center', t.active ? 'relative -mb-px h-[22px] bg-white pb-0.5' : 'h-[19px] bg-[#f1f1f1]')}
        >
          {t.label}
        </button>
      ))}
    </div>
    <div className="mr-0.5 grow border border-[#d4d4d4] bg-white pt-[5px] pr-px pl-[3px]">
      <table className="w-full table-fixed border-collapse text-black">
        <colgroup><col className="w-[152px]" /><col /></colgroup>
        <tbody>
          {properties.map(([name, value]) => (
            <tr key={name} className="h-[15px] leading-[14px]">
              <th scope="row" className="border border-[#bdbdbd] px-px text-left font-normal whitespace-nowrap">{name}</th>
              <td className="border border-[#bdbdbd] px-0.5">{value}</td>
            </tr>
          ))}
        </tbody>
      </table>
    </div>
  </aside>
)

/* ---------- status bar and taskbar ---------- */

const StatusBar = () => (
  <footer className="flex h-[22px] items-center border-t border-[#8d97a6] bg-linear-to-b from-[#e3e5e8] to-[#b9bec4] text-[#444]">
    <span className="w-1/2 border-r border-[#8d949d] pl-2 leading-5">Vista Diseño</span>
    <div className="flex w-1/2 items-center justify-end">
      <span>Bloq Mayús</span>
      <span className="ml-4 pr-[10px]">Bloq Num</span>
      <span className="h-5 w-px bg-[#9ba0a8]" />
      <div className="ml-2 flex items-center gap-[5px] pr-px">
        <button aria-label="Vista Informe"><Svg w={12} h={11}><path d="M1.500.500h10v10h-10zM4.500.500v10M6.500 3.500h3v2h-3z" stroke="#444" /><path d="M1 0v11" stroke="#444" strokeWidth="2" strokeDasharray="1 1" /></Svg></button>
        <button aria-label="Vista preliminar"><Svg w={12} h={11}><path d="M.500.500h9v8h-9zM0 2.500h10" stroke="#444" /><circle cx="8" cy="6" r="2.500" fill="#ddd" stroke="#444" /><path d="M10 8l2 3" stroke="#444" /></Svg></button>
        <button aria-label="Vista Presentación"><Svg w={12} h={11}><path d="M1.500 0v11M10.500 0v11M1 1.500h10M1 9.500h10M4 4.500h4M5 6.500h3" stroke="#444" /></Svg></button>
        <button aria-label="Vista Diseño" className="flex h-5 w-[19px] items-center justify-center rounded-[3px] border border-[#c29a45] bg-[#ffdc6d]"><Svg w={12} h={11}><path d="M1 1v5l4-2M1 8h10v2H1zM11 0L4 7" stroke="#444" strokeWidth="1.500" /></Svg></button>
      </div>
    </div>
  </footer>
)

const OfficeTile = ({ letter, color, tint }: { letter: string; color: string; tint: string }) => (
  <Svg w={22} h={22}>
    <path d="M2 1l18-1q2 0 2 2v18q0 2-2 2H1q-1 0-1-2V3q0-2 2-2z" fill={tint} />
    <path d="M2 1l18-1q2 0 2 2v3Q10 6 0 12V3q0-2 2-2z" fill="#fff" fillOpacity=".6" />
    <text x="2" y="17" fontSize={letter === 'W' ? 16 : 19} fontWeight="bold" fontFamily="Liberation Sans, sans-serif" fill={color}>{letter}</text>
    <path d="M14 12l7-1v10h-7z" fill="#fff" />
    <path d="M15 14.500h5M15 16.500h5M15 18.500h5" stroke={color} strokeOpacity=".5" />
  </Svg>
)

const apps: { name: string; icon: ReactNode; state?: string }[] = [
  { name: 'Inicio', icon: <Svg w={16} h={16}><path d="M0 2l7-1v6.500H0zM8 1l8-1v7.500H8zM0 8.500h7V15l-7-1zM8 8.500h8V16l-8-1z" fill="#fff" /></Svg> },
  { name: 'Vista de tareas', icon: <Svg w={20} h={14}><path d="M5.500.500h9v13h-9zM3 1.500H.500v11H3M17 1.500h2.500v11H17" stroke="#fff" /></Svg> },
  { name: 'Explorador', icon: <Svg w={22} h={18}><path d="M0 0h8l1 2h13v16H0z" fill="#f8d775" /><path d="M0 3h22v3H0z" fill="#ffe9a3" /><path d="M4 18v-8h14v8h-4v-4H8v4z" fill="#35a4dc" /></Svg> },
  {
    name: 'Internet Explorer',
    icon: (
      <Svg w={24} h={24}>
        <path d="M19 16a7.500 7.500 0 1 1 1-4H6" stroke="#4fc3f2" strokeWidth="4" />
        <path d="M3 21C-1 16 9 4 17 2q6-2 4 4" stroke="#f5c92f" strokeWidth="2" />
      </Svg>
    ),
  },
  {
    name: 'Chrome',
    state: 'running',
    icon: (
      <Svg w={22} h={22}>
        <circle cx="11" cy="11" r="11" fill="#f9c623" />
        <path d="M11 11L1.500 5.500A11 11 0 0 1 20.500 5.500z" fill="#dd4b3e" /><path d="M11 5.500h9.500" stroke="#dd4b3e" strokeWidth="1" />
        <path d="M11 11L1.500 5.500A11 11 0 0 0 11 22l5-8z" fill="#2aa457" />
        <circle cx="11" cy="11" r="5" fill="#fff" /><circle cx="11" cy="11" r="4" fill="#4688f1" />
      </Svg>
    ),
  },
  { name: 'Word', icon: <OfficeTile letter="W" color="#1f5bb5" tint="#bcd6f5" /> },
  { name: 'PowerPoint', icon: <OfficeTile letter="P" color="#d9531e" tint="#f7b48f" /> },
  { name: 'Excel', icon: <OfficeTile letter="X" color="#2e8b3d" tint="#a8d8a4" /> },
  { name: 'Access', icon: <OfficeTile letter="A" color="#b3124c" tint="#ee9dbd" />, state: 'active' },
  {
    name: 'Paint',
    icon: (
      <Svg w={24} h={24}>
        <path d="M1 14C1 6 19 3 21 11c1 6-3 5-5 7-2 3-7 4-9 1-1-2-6 0-6-5z" fill="#cfe2f1" />
        <circle cx="5" cy="13" r="2" fill="#d8432b" /><circle cx="9" cy="9" r="2" fill="#46a347" /><circle cx="14" cy="8" r="2" fill="#f0b92c" /><circle cx="11" cy="15" r="2" fill="#1c2530" />
        <path d="M21 1l2 2-7 12-3 8 1-10z" fill="#d98b35" />
      </Svg>
    ),
  },
]

const Taskbar = () => (
  <footer className="flex h-10 justify-between bg-[#020409] text-white">
    <div className="flex">
      {apps.map((app) => (
        <button
          key={app.name}
          aria-label={app.name}
          className={clsx(
            'flex w-[49px] items-center justify-center border-b-2',
            app.state === 'active' ? 'border-[#76b9ed] bg-[#333438]' : app.state === 'running' ? 'border-[#76b9ed]' : 'border-transparent',
          )}
        >
          {app.icon}
        </button>
      ))}
    </div>
    <div className="flex items-center">
      <Svg w={16} h={16}><circle cx="11" cy="4" r="3" stroke="#fff" /><circle cx="5" cy="8" r="2.500" stroke="#fff" /><path d="M0 16q1-6 5-5t4 5M8 9q6-4 8 3" stroke="#fff" /></Svg>
      <span className="ml-6"><Svg w={11} h={7}><path d="M0 6l5.500-5L11 6" stroke="#fff" strokeWidth="1.500" /></Svg></span>
      <span className="ml-[11px]"><Svg w={17} h={14}><path d="M5 4.500h9.500v7H6M14.500 7h2v3h-2M1 3h5v2q-2 3-4 0zM2 0v3M5 0v3M4 6v6" stroke="#fff" /><path d="M7 6h2v4H7z" fill="#fff" /></Svg></span>
      <span className="ml-[11px]"><Svg w={13} h={13}><path d="M1 12Q1 1 12 1M4 12q0-8 8-8M7 12q0-5 5-5" stroke="#ccc" /><circle cx="11" cy="11" r="2" fill="#fff" /></Svg></span>
      <span className="ml-2"><Svg w={17} h={14}><path d="M.500 4.500h3L7.500 1v12l-4-3.500h-3zM9.500 5q1 2 0 4M12 3q3 4 0 8M14 1q4 6 0 12" stroke="#fff" /></Svg></span>
      <div className="ml-2 w-[60px] text-center font-[Roboto,sans-serif] text-[11px] leading-[18px]">
        <p>17:05</p>
        <p>28/02/2018</p>
      </div>
      <button aria-label="Notificaciones" className="mr-5 ml-[17px]"><Svg w={16} h={16}><path d="M.500.500h15v12H10L7.500 15 5 12.500H.500z" stroke="#fff" /></Svg></button>
      <span className="mr-1 h-full w-px bg-[#4b4d52]" />
    </div>
  </footer>
)

export default function App() {
  return (
    <div className="relative flex min-h-screen flex-col overflow-hidden bg-[#a9b0bb] font-['Noto_Sans',sans-serif] text-[11px] text-[#333]">
      <Header />
      <Ribbon />
      <QuickBar />
      <div className="flex grow gap-1 pl-[3px]">
        <NavPane />
        <DocumentArea />
      </div>
      <StatusBar />
      <Taskbar />
      <PropertySheet />
    </div>
  )
}
